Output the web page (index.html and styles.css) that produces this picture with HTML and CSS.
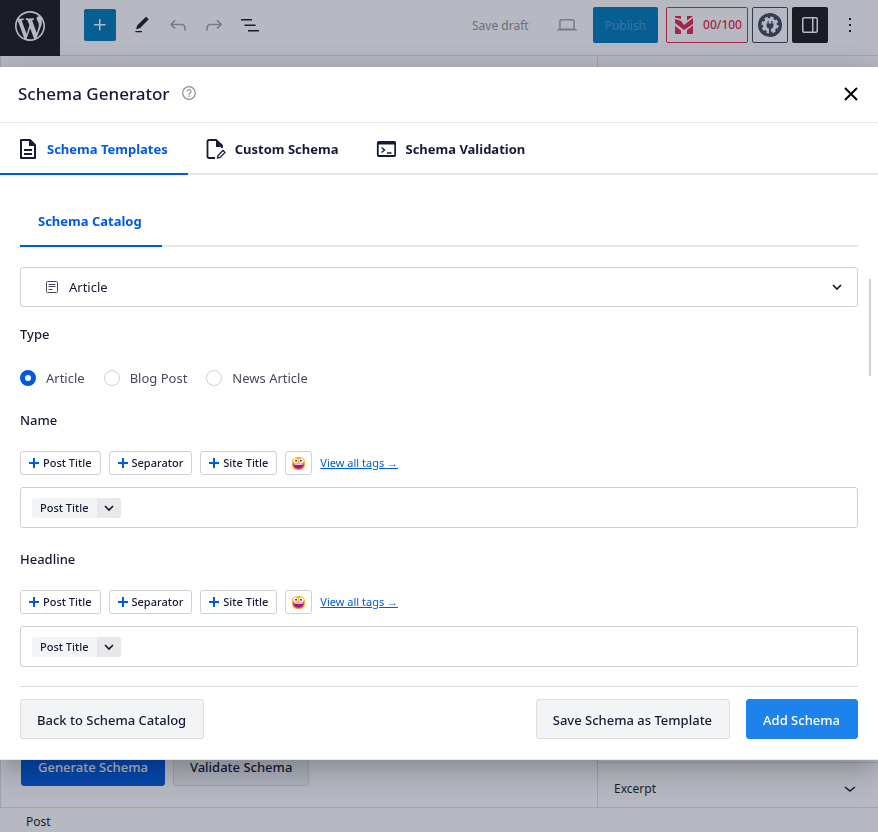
FILE: index.html
```html
<!DOCTYPE html>
<html lang="en">
<head>
<meta charset="utf-8">
<meta name="viewport" content="width=device-width, initial-scale=1">
<title>Schema Generator</title>
<link rel="stylesheet" href="styles.css">
</head>
<body>
<svg class="sprite" aria-hidden="true">
  <symbol id="plus" viewBox="0 0 10 10"><path d="M5 0v10M0 5h10" stroke="currentColor" stroke-width="2"/></symbol>
  <symbol id="chevron" viewBox="0 0 12 12"><path d="M2 4l4 4 4-4" fill="none" stroke="currentColor" stroke-width="1.700"/></symbol>
  <symbol id="emoji" viewBox="0 0 16 16">
    <rect x="1" y="1" width="14" height="14" rx="6" fill="#fbb034"/>
    <path d="M1.600 9a6.500 6.500 0 0 0 12.800 0z" fill="#f4733c"/>
    <circle cx="5" cy="5" r="2.400" fill="#fff"/><circle cx="11" cy="5" r="2.400" fill="#fff"/>
    <circle cx="5.400" cy="5" r="1" fill="#4a2431"/><circle cx="10.600" cy="5" r="1" fill="#4a2431"/>
    <path d="M2.500 8h11c0 3.500-2.500 5.500-5.500 5.500S2.500 11.500 2.500 8z" fill="#a3127e"/><path d="M3.500 8h9v1.300h-9z" fill="#fff"/>
  </symbol>
</svg>

<div class="editor">
  <header class="topbar">
    <a class="wp-logo" href="#" aria-label="WordPress">
      <svg viewBox="-2 -2 24 24" width="36" height="36"><path fill="currentColor" d="M20 10c0-5.51-4.49-10-10-10C4.480 0 0 4.490 0 10c0 5.520 4.480 10 10 10 5.510 0 10-4.480 10-10zM7.780 15.370L4.370 6.220c.55-.02 1.170-.08 1.170-.08.5-.06.44-1.130-.06-1.110 0 0-1.450.11-2.370.11-.18 0-.37 0-.58-.01C4.120 2.690 6.870 1.110 10 1.110c2.330 0 4.450.87 6.050 2.340-.68-.11-1.650.39-1.650 1.580 0 .74.45 1.360.9 2.100.35.61.55 1.360.55 2.460 0 1.490-1.400 5-1.400 5l-3.030-8.370c.54-.02.82-.17.82-.17.5-.05.44-1.250-.06-1.220 0 0-1.440.12-2.380.12-.87 0-2.330-.12-2.330-.12-.5-.03-.56 1.200-.06 1.220l.92.08 1.260 3.410zM17.410 10c.24-.64.74-1.870.43-4.250.7 1.290 1.050 2.710 1.050 4.250 0 3.290-1.730 6.240-4.400 7.780.97-2.590 1.940-5.200 2.920-7.780zM6.100 18.090C3.120 16.650 1.110 13.530 1.110 10c0-1.300.23-2.480.72-3.590C3.250 10.300 4.670 14.200 6.100 18.090zm4.030-6.630l2.580 6.980c-.86.29-1.760.45-2.710.45-.79 0-1.570-.11-2.290-.33.81-2.380 1.620-4.740 2.420-7.100z"/></svg>
    </a>
    <div class="tools">
      <button class="inserter" aria-label="Add block"><svg viewBox="0 0 24 24" width="24" height="24"><path fill="currentColor" d="M11 12.500V17.500H12.500V12.500H17.500V11H12.500V6H11V11H6V12.500H11Z"/></svg></button>
      <button class="icon-btn" aria-label="Tools"><svg viewBox="0 0 24 24" width="20" height="20"><path fill="currentColor" d="M20.100 5.100L16.900 2 6.200 12.700l-1.300 4.400 4.500-1.300L20.100 5.100zM4 20.800h8v-1.500H4v1.500z"/></svg></button>
      <button class="icon-btn muted" aria-label="Undo"><svg viewBox="0 0 24 24" width="24" height="24"><path fill="currentColor" d="M18.300 11.700c-.6-.6-1.400-.9-2.300-.9H6.700l2.900-3.300-1.100-1-4.500 5L8.500 16l1-1-2.700-2.700H16c.5 0 .9.2 1.300.5 1 1 1 3.400 1 4.500v.3h1.500v-.2c0-1.500 0-4.300-1.500-5.700z"/></svg></button>
      <button class="icon-btn muted" aria-label="Redo"><svg viewBox="0 0 24 24" width="24" height="24"><path fill="currentColor" d="M15.600 6.500l-1.100 1 2.900 3.300H8c-.9 0-1.700.3-2.300.9-1.400 1.500-1.400 4.200-1.400 5.600v.2h1.500v-.3c0-1.100 0-3.500 1-4.500.3-.3.7-.5 1.300-.5h9.200L14.500 15l1.100 1.100 4.600-4.600-4.600-5z"/></svg></button>
      <button class="icon-btn" aria-label="Document overview"><svg viewBox="0 0 24 24" width="24" height="24"><path fill="currentColor" d="M3 6h11v1.500H3V6Zm3.500 5.500h11V13h-11v-1.500ZM21 17H10v1.500h11V17Z"/></svg></button>
    </div>
    <div class="settings">
      <button class="save-draft">Save draft</button>
      <button class="icon-btn muted preview" aria-label="Preview"><svg viewBox="0 0 24 24" width="24" height="24"><path fill="currentColor" d="M20.500 16h-.7V8c0-1.100-.9-2-2-2H6.200c-1.100 0-2 .9-2 2v8h-.7c-.8 0-1.500.7-1.500 1.500h20c0-.8-.7-1.500-1.500-1.500zM5.700 8c0-.3.2-.5.5-.5h11.600c.3 0 .5.2.5.5v7.600H5.700V8z"/></svg></button>
      <button class="publish">Publish</button>
      <div class="plugins">
        <button class="score"><svg viewBox="0 0 18 18" width="18" height="18"><path fill="currentColor" d="M0 0h6v3L0 1.500zM0 3l6 2 3 4 9-7v6l-9 6-9-7zM0 10l6 4.500V18H0zM12 14l6-4.500V18h-6zM12 0h6l-6 4.500z"/></svg>00/100</button>
        <button class="gear" aria-label="Plugin settings"><svg viewBox="0 0 24 24" width="24" height="24"><circle cx="12" cy="12" r="12" fill="currentColor"/><circle cx="12" cy="12" r="7" fill="#fff"/><circle cx="12" cy="12" r="7.500" fill="none" stroke="#fff" stroke-width="2.200" stroke-dasharray="3.400 2.490"/><path fill="currentColor" d="M9.500 8h1.200v2.500h2.600V8h1.200v2.500h1v2a3.500 3.500 0 0 1-2.500 3.300V22h-2v-6.200a3.500 3.500 0 0 1-2.500-3.300v-2h1z"/></svg></button>
        <button class="drawer" aria-label="Settings"><svg viewBox="0 0 24 24" width="24" height="24"><path fill="currentColor" d="M18 4H6c-1.100 0-2 .9-2 2v12c0 1.100.9 2 2 2h12c1.100 0 2-.9 2-2V6c0-1.100-.9-2-2-2zm-4 14.500H6c-.3 0-.5-.2-.5-.5V6c0-.3.2-.5.5-.5h8v13zm4.500-.5c0 .3-.2.5-.5.5h-2.500v-13H18c.3 0 .5.2.5.5v12z"/></svg></button>
        <button class="icon-btn" aria-label="Options"><svg viewBox="0 0 24 24" width="24" height="24"><path fill="currentColor" d="M13 19h-2v-2h2v2zm0-6h-2v-2h2v2zm0-6h-2V5h2v2z"/></svg></button>
      </div>
    </div>
  </header>
  <div class="workspace">
    <main class="canvas">
      <button class="generate">Generate Schema</button>
      <button class="validate">Validate Schema</button>
    </main>
    <aside class="sidebar">
      <button class="panel-toggle">Excerpt <svg viewBox="0 0 16 16" width="16" height="16"><path d="M3 6l5 4 5-4" fill="none" stroke="currentColor" stroke-width="1.600"/></svg></button>
    </aside>
  </div>
  <footer class="breadcrumb">Post</footer>
</div>

<div class="overlay">
  <section class="modal" role="dialog" aria-modal="true" aria-labelledby="modal-title">
    <header class="modal-head">
      <h1 id="modal-title">Schema Generator</h1>
      <button class="help" aria-label="Help"><svg viewBox="0 0 14 14" width="14" height="14" fill="none" stroke="currentColor"><circle cx="7" cy="7" r="6.300" stroke-width="1.200"/><path d="M5 5.500a2 2 0 1 1 3 1.800c-.7.4-1 .7-1 1.400M7 9.800V11" stroke-width="1.200"/></svg></button>
      <button class="close" aria-label="Close"><svg viewBox="0 0 14 14" width="14" height="14"><path d="M1 1l12 12M13 1L1 13" stroke="currentColor" stroke-width="2"/></svg></button>
    </header>
    <nav class="tabs">
      <button class="tab active"><svg viewBox="0 0 20 20" width="20" height="20"><path d="M3 1h9l5 5v13H3z" fill="none" stroke="currentColor" stroke-width="2" stroke-linejoin="round"/><path d="M11 1l6 6h-6z" fill="currentColor"/><path d="M6 11h8M6 15h8" stroke="currentColor" stroke-width="2"/></svg><span>Schema Templates</span></button>
      <button class="tab"><svg viewBox="0 0 20 20" width="20" height="20"><path d="M9 19H3a1.500 1.500 0 0 1-1.500-1.500v-15A1.500 1.500 0 0 1 3 1h7l6 5.500V9" fill="none" stroke="currentColor" stroke-width="1.800"/><path d="M10 1l6 7h-6z" fill="currentColor"/><path d="M11.500 19l.5-2.500 5-5 2 2-5 5z" fill="none" stroke="currentColor" stroke-width="1.300"/></svg><span>Custom Schema</span></button>
      <button class="tab"><svg viewBox="0 0 20 20" width="20" height="20"><rect x="1.800" y="3" width="17.400" height="14" rx="1" fill="none" stroke="currentColor" stroke-width="1.800"/><path d="M1.500 3h18v2.500h-18z" fill="currentColor"/><path d="M5.500 8.500l3 2.500-3 2.500M11 14h4.500" fill="none" stroke="currentColor" stroke-width="1.400"/></svg><span>Schema Validation</span></button>
    </nav>
    <div class="modal-body">
      <nav class="subtabs"><button class="subtab">Schema Catalog</button></nav>
      <div class="select-wrap">
        <svg class="lead" viewBox="0 0 12 12" width="12" height="12" fill="none" stroke="currentColor"><rect x=".5" y=".5" width="11" height="11" rx="1"/><path d="M2.500 3.500h7M2.500 5.500h7M2.500 8.500h4"/></svg>
        <select aria-label="Schema"><option>Article</option></select>
        <svg class="caret" width="12" height="12"><use href="#chevron"/></svg>
      </div>
      <fieldset class="type">
        <legend>Type</legend>
        <label><input type="radio" name="type" checked>Article</label>
        <label><input type="radio" name="type">Blog Post</label>
        <label><input type="radio" name="type">News Article</label>
      </fieldset>
      <div class="field">
        <label for="name">Name</label>
        <div class="tags">
          <button class="tag"><svg width="10" height="10"><use href="#plus"/></svg>Post Title</button>
          <button class="tag"><svg width="10" height="10"><use href="#plus"/></svg>Separator</button>
          <button class="tag"><svg width="10" height="10"><use href="#plus"/></svg>Site Title</button>
          <button class="tag emoji" aria-label="Insert emoji"><svg width="15" height="15"><use href="#emoji"/></svg></button>
          <a href="#">View all tags →</a>
        </div>
        <div class="box"><button class="chip"><span>Post Title</span><i><svg width="12" height="12"><use href="#chevron"/></svg></i></button><input id="name" type="text"></div>
      </div>
      <div class="field">
        <label for="headline">Headline</label>
        <div class="tags">
          <button class="tag"><svg width="10" height="10"><use href="#plus"/></svg>Post Title</button>
          <button class="tag"><svg width="10" height="10"><use href="#plus"/></svg>Separator</button>
          <button class="tag"><svg width="10" height="10"><use href="#plus"/></svg>Site Title</button>
          <button class="tag emoji" aria-label="Insert emoji"><svg width="15" height="15"><use href="#emoji"/></svg></button>
          <a href="#">View all tags →</a>
        </div>
        <div class="box"><button class="chip"><span>Post Title</span><i><svg width="12" height="12"><use href="#chevron"/></svg></i></button><input id="headline" type="text"></div>
      </div>
      <span class="scroll-thumb"></span>
    </div>
    <footer class="modal-foot">
      <button class="btn">Back to Schema Catalog</button>
      <button class="btn save">Save Schema as Template</button>
      <button class="btn primary">Add Schema</button>
    </footer>
  </section>
</div>
</body>
</html>
```
FILE: styles.css
```css
* { box-sizing: border-box; }
body {
  margin: 0;
  font: 13px/20px "Noto Sans", "Open Sans", sans-serif;
  color: #141b38;
  overflow: hidden;
}
button, input, select { font: inherit; color: inherit; margin: 0; }
button { padding: 0; border: 0; background: none; white-space: nowrap; cursor: pointer; }
svg { display: block; flex: none; }
.sprite { position: absolute; width: 0; height: 0; }

/* Editor behind the dialog */
.editor { display: flex; flex-direction: column; height: 100vh; background: #fff; color: #1e1e1e; }
.topbar { display: flex; justify-content: space-between; height: 56px; border-bottom: 1px solid #e0e0e0; }
.wp-logo { display: flex; align-items: center; justify-content: center; width: 60px; height: 56px; padding-bottom: 4px; background: #1e1e1e; color: #fff; }
.tools, .settings, .plugins { display: flex; align-items: center; }
.tools { margin-right: auto; padding: 0 0 5px 24px; }
.settings { padding: 0 10px 5px 0; }
.plugins { gap: 4px; margin-left: 8px; }
.icon-btn, .inserter, .gear, .drawer { display: flex; align-items: center; justify-content: center; width: 36px; height: 36px; border-radius: 2px; }
.inserter { width: 32px; height: 32px; margin-right: 8px; background: #007cba; color: #fff; }
.muted { color: #a4a4a4; }
.save-draft { padding: 2px 12px 0; color: #949494; font-size: 12px; }
.preview { margin: 0 8px; }
.publish { height: 36px; padding: 2px 12px 0; border-radius: 2px; background: #007cba; color: #4b9fca; font-size: 12px; }
.score { display: flex; align-items: center; gap: 10px; height: 36px; padding: 0 5px 0 8px; border: 1px solid #e8284f; border-radius: 2px; color: #e8284f; font-size: 12px; font-weight: 500; }
.gear { border: 1px solid #434960; color: #434960; }
.drawer { background: #1e1e1e; color: #fff; }
.workspace { display: flex; flex: 1; min-height: 0; }
.canvas { display: flex; align-items: flex-end; gap: 8px; flex: 1; padding: 0 20px 21px; border-left: 1px solid #e0e0e0; border-right: 1px solid #e0e0e0; }
.canvas button { height: 40px; padding: 2px 16px 0; border: 1px solid #005ae0; border-radius: 3px; font-weight: 500; }
.canvas .generate { background: #005ae0; color: #fff; }
.canvas .validate { background: #f3f4f5; border-color: #dcdde1; color: #141b38; }
.sidebar { display: flex; align-items: flex-end; width: 280px; }
.panel-toggle { display: flex; align-items: center; justify-content: space-between; width: 100%; height: 45px; padding: 8px 20px 0 16px; border-top: 1px solid #e0e0e0; font-size: 12px; }
.breadcrumb { height: 25px; padding: 4px 26px 0; border-top: 1px solid #e0e0e0; font-size: 12px; }

/* Dialog */
.overlay { position: fixed; inset: 0; display: flex; padding: 67px 0 72px; background: rgba(19, 29, 58, .31); }
.modal { display: flex; flex-direction: column; flex: 1; min-width: 0; background: #fff; border-bottom: 1px solid #e8e8eb; box-shadow: 0 8px 30px rgba(0, 0, 0, .3); }
.modal-head { display: flex; align-items: center; flex: none; height: 56px; padding: 0 20px 2px 18px; border-bottom: 1px solid #e8e8eb; }
h1 { margin: 0; font-size: 17px; line-height: 24px; font-weight: 500; }
.help { margin: 0 auto 2px 12px; color: #8c8f9a; }
.close { color: #000; }
.tabs { display: flex; flex: none; height: 52px; border-bottom: 2px solid #e8e8eb; }
.tab, .subtab { padding: 2px 20px 0 18px; margin-bottom: -2px; border-bottom: 2px solid transparent; font-weight: 700; }
.tab { display: flex; align-items: center; gap: 9px; }
.tab.active, .subtab { border-color: #005ae0; }
.tab.active span, .subtab { color: #005ae0; }
.modal-body { position: relative; flex: 1; min-height: 0; padding: 20px 20px 0; overflow: hidden; }
.subtabs { display: flex; height: 52px; border-bottom: 2px solid #e8e8eb; }
.select-wrap { position: relative; margin: 20px 0 17px; }
select { display: block; width: 100%; height: 40px; padding: 0 48px; border: 1px solid #d0d1d7; border-radius: 3px; background: #fff; appearance: none; }
.lead, .caret { position: absolute; top: 14px; pointer-events: none; }
.lead { left: 26px; color: #434960; }
.caret { right: 15px; }
.type { display: flex; gap: 19px; margin: 0; padding: 24px 0 0; border: 0; }
legend, .field > label { padding: 0; font-weight: 500; }
.type label { display: flex; align-items: center; gap: 10px; color: #434960; }
.type input { width: 16px; height: 16px; border: 1px solid #d0d1d7; border-radius: 50%; background: #fff; appearance: none; }
.type input:checked { border: 5px solid #005ae0; }
.field { padding-top: 22px; }
.field + .field { padding-top: 21px; }
.field > label { display: block; }
.tags { display: flex; align-items: center; gap: 8px; margin: 21px 0 12px; font-size: 11px; }
.tag { display: flex; align-items: center; gap: 4px; height: 24px; padding: 0 8px; border: 1px solid #d0d1d7; border-radius: 3px; font-weight: 500; }
.tag svg { color: #005ae0; }
.tag.emoji { padding: 0 5px; }
.tags a { color: #005ae0; }
.box { display: flex; align-items: center; height: 41px; padding: 0 11px; border: 1px solid #d0d1d7; border-radius: 3px; }
.box input { flex: 1; min-width: 0; border: 0; outline: 0; background: none; }
.chip { display: flex; height: 20px; border-radius: 3px; overflow: hidden; background: #f3f4f5; font-size: 11px; font-weight: 500; }
.chip span { padding: 0 8px; }
.chip i { display: flex; align-items: center; padding: 0 6px; background: #e8e8eb; }
.scroll-thumb { position: absolute; top: 104px; right: 7px; width: 2px; height: 97px; background: #d0d0d3; }
.modal-foot { display: flex; flex: none; gap: 16px; margin: 0 20px; padding: 12px 0 20px; border-top: 1px solid #dcdde1; }
.btn { height: 40px; padding: 2px 17px 0 16px; border: 1px solid #dcdde1; border-radius: 3px; background: #f3f4f5; font-weight: 500; }
.save { margin-left: auto; }
.primary { background: #1d82eb; border-color: #1d82eb; color: #fff; }
```
